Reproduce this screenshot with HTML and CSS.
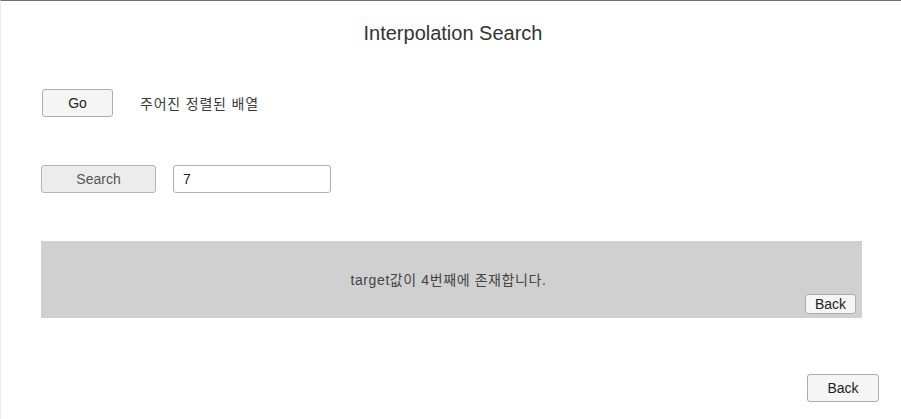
FILE: index.html
```html
<!DOCTYPE html>
<html lang="ko">
<head>
<meta charset="utf-8">
<title>Interpolation Search</title>
<link rel="stylesheet" href="styles.css">
</head>
<body>
<div class="page">
  <h1 class="title">Interpolation Search</h1>
  <div class="row row-go">
    <button class="btn btn-go">Go</button>
    <span class="label">주어진 정렬된 배열</span>
  </div>
  <div class="row row-search">
    <button class="btn btn-search">Search</button>
    <input class="field" type="text" value="7">
  </div>
  <div class="panel">
    <div class="result">target값이 4번째에 존재합니다.</div>
    <button class="btn btn-small">Back</button>
  </div>
  <div class="footer">
    <button class="btn btn-back">Back</button>
  </div>
</div>
</body>
</html>
```
FILE: styles.css
```css
html, body {
  margin: 0;
  padding: 0;
  background: #ffffff;
}
body {
  font-family: "Liberation Sans", Arial, "Noto Sans CJK KR", sans-serif;
  color: #222;
}
.page {
  width: 900px;
  height: 418px;
  border-top: 1px solid #6f6f6f;
  border-left: 1px solid #ececec;
  display: flex;
  flex-direction: column;
}
.title {
  margin: 0;
  padding-top: 20px;
  padding-left: 4px;
  font-size: 20px;
  line-height: 24px;
  font-weight: normal;
  text-align: center;
  color: #333;
}
.row {
  display: flex;
  align-items: center;
  padding-left: 40px;
}
.row-go {
  margin-top: 44px;
  padding-left: 41px;
}
.row-search {
  margin-top: 48px;
}
.btn {
  font-family: "Liberation Sans", Arial, sans-serif;
  font-size: 14px;
  color: #222;
  background: #f5f5f5;
  border: 1px solid #adadad;
  border-radius: 3px;
  padding: 0;
  height: 28px;
  box-sizing: border-box;
}
.btn-go {
  width: 71px;
}
.label {
  margin-left: 27px;
  font-family: "Noto Sans CJK KR", sans-serif;
  font-size: 14px;
  letter-spacing: 0.8px;
  color: #3a3a3a;
  line-height: 20px;
}
.btn-search {
  width: 115px;
  background: #ececec;
  color: #555;
  border-color: #b4b4b4;
}
.field {
  margin-left: 17px;
  width: 158px;
  height: 28px;
  box-sizing: border-box;
  border: 1px solid #b0b0b0;
  border-radius: 3px;
  padding: 0 9px;
  font-family: "Liberation Sans", Arial, sans-serif;
  font-size: 14px;
  color: #222;
  outline: none;
}
.panel {
  margin-top: 48px;
  margin-left: 40px;
  width: 821px;
  height: 77px;
  box-sizing: border-box;
  background: #d0d0d0;
  padding: 30px 6px 4px 0;
  display: flex;
  flex-direction: column;
}
.result {
  text-align: center;
  font-family: "Liberation Sans", Arial, "Noto Sans CJK KR", sans-serif;
  font-size: 14px;
  letter-spacing: 0.6px;
  line-height: 18px;
  color: #444;
}
.btn-small {
  align-self: flex-end;
  margin-top: 5px;
  width: 51px;
  height: 20px;
  font-size: 14px;
  line-height: 18px;
  background: #f5f5f5;
}
.footer {
  display: flex;
  justify-content: flex-end;
  margin-top: 56px;
  padding-right: 22px;
}
.btn-back {
  width: 72px;
}
```
